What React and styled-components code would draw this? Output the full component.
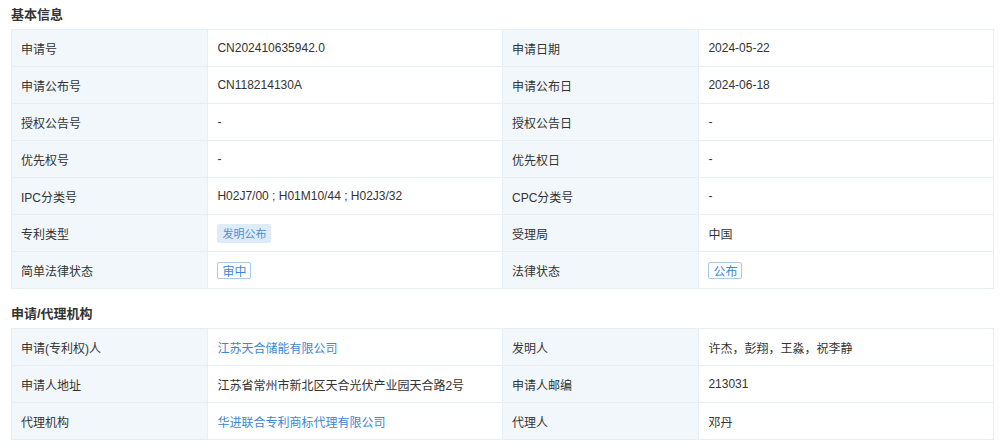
import React from "react";
import styled, { createGlobalStyle } from "styled-components";

const Global = createGlobalStyle`
  html, body { margin: 0; padding: 0; background: #fff; }
  body { font-family: "Liberation Sans", "Noto Sans CJK SC", sans-serif; color: #333; }
`;

const Page = styled.div`
  padding: 0 6px 0 11px;
`;

const Section = styled.section`
  & + & { margin-top: 10px; }
`;

const Title = styled.h3`
  margin: 0;
  height: 29px;
  padding-bottom: 3px;
  box-sizing: border-box;
  display: flex;
  align-items: center;
  font-size: 13px;
  font-weight: bold;
  color: #333;
`;

const Table = styled.div`
  display: grid;
  grid-template-columns: 20% 30% 20% 30%;
  border-top: 1px solid #e8eef2;
  border-left: 1px solid #e8eef2;
`;

const Cell = styled.div`
  height: 36px;
  box-sizing: content-box;
  border-right: 1px solid #e8eef2;
  border-bottom: 1px solid #e8eef2;
  padding: 0 9px;
  display: flex;
  align-items: center;
  font-size: 12px;
  color: #333;
  background: ${(p) => (p.$label ? "#f2f7fb" : "#fff")};
  white-space: nowrap;
  overflow: hidden;
`;

const Link = styled.span`
  color: #3a87d4;
`;

const Tag = styled.span`
  display: inline-flex;
  align-items: center;
  height: ${(p) => (p.$outline ? "17px" : "19px")};
  box-sizing: border-box;
  padding: 0 ${(p) => (p.$outline ? "4px" : "5px")};
  font-size: ${(p) => (p.$outline ? "12px" : "11px")};
  color: ${(p) => (p.$outline ? "#3a87d4" : "#4a8fd2")};
  background: ${(p) => (p.$outline ? "#fff" : "#deecfa")};
  border: ${(p) => (p.$outline ? "1px solid #a9cbe8" : "none")};
  border-radius: 2px;
`;

const basic = [
  ["申请号", "CN202410635942.0", "申请日期", "2024-05-22"],
  ["申请公布号", "CN118214130A", "申请公布日", "2024-06-18"],
  ["授权公告号", "-", "授权公告日", "-"],
  ["优先权号", "-", "优先权日", "-"],
  ["IPC分类号", "H02J7/00 ; H01M10/44 ; H02J3/32", "CPC分类号", "-"],
  ["专利类型", <Tag>发明公布</Tag>, "受理局", "中国"],
  ["简单法律状态", <Tag $outline>审中</Tag>, "法律状态", <Tag $outline>公布</Tag>],
];

const agency = [
  ["申请(专利权)人", <Link>江苏天合储能有限公司</Link>, "发明人", "许杰，彭翔，王淼，祝李静"],
  ["申请人地址", "江苏省常州市新北区天合光伏产业园天合路2号", "申请人邮编", "213031"],
  ["代理机构", <Link>华进联合专利商标代理有限公司</Link>, "代理人", "邓丹"],
];

function InfoTable({ rows }) {
  return (
    <Table>
      {rows.map((r, i) => (
        <React.Fragment key={i}>
          <Cell $label>{r[0]}</Cell>
          <Cell>{r[1]}</Cell>
          <Cell $label>{r[2]}</Cell>
          <Cell>{r[3]}</Cell>
        </React.Fragment>
      ))}
    </Table>
  );
}

export default function App() {
  return (
    <Page>
      <Global />
      <Section>
        <Title>基本信息</Title>
        <InfoTable rows={basic} />
      </Section>
      <Section>
        <Title>申请/代理机构</Title>
        <InfoTable rows={agency} />
      </Section>
    </Page>
  );
}
